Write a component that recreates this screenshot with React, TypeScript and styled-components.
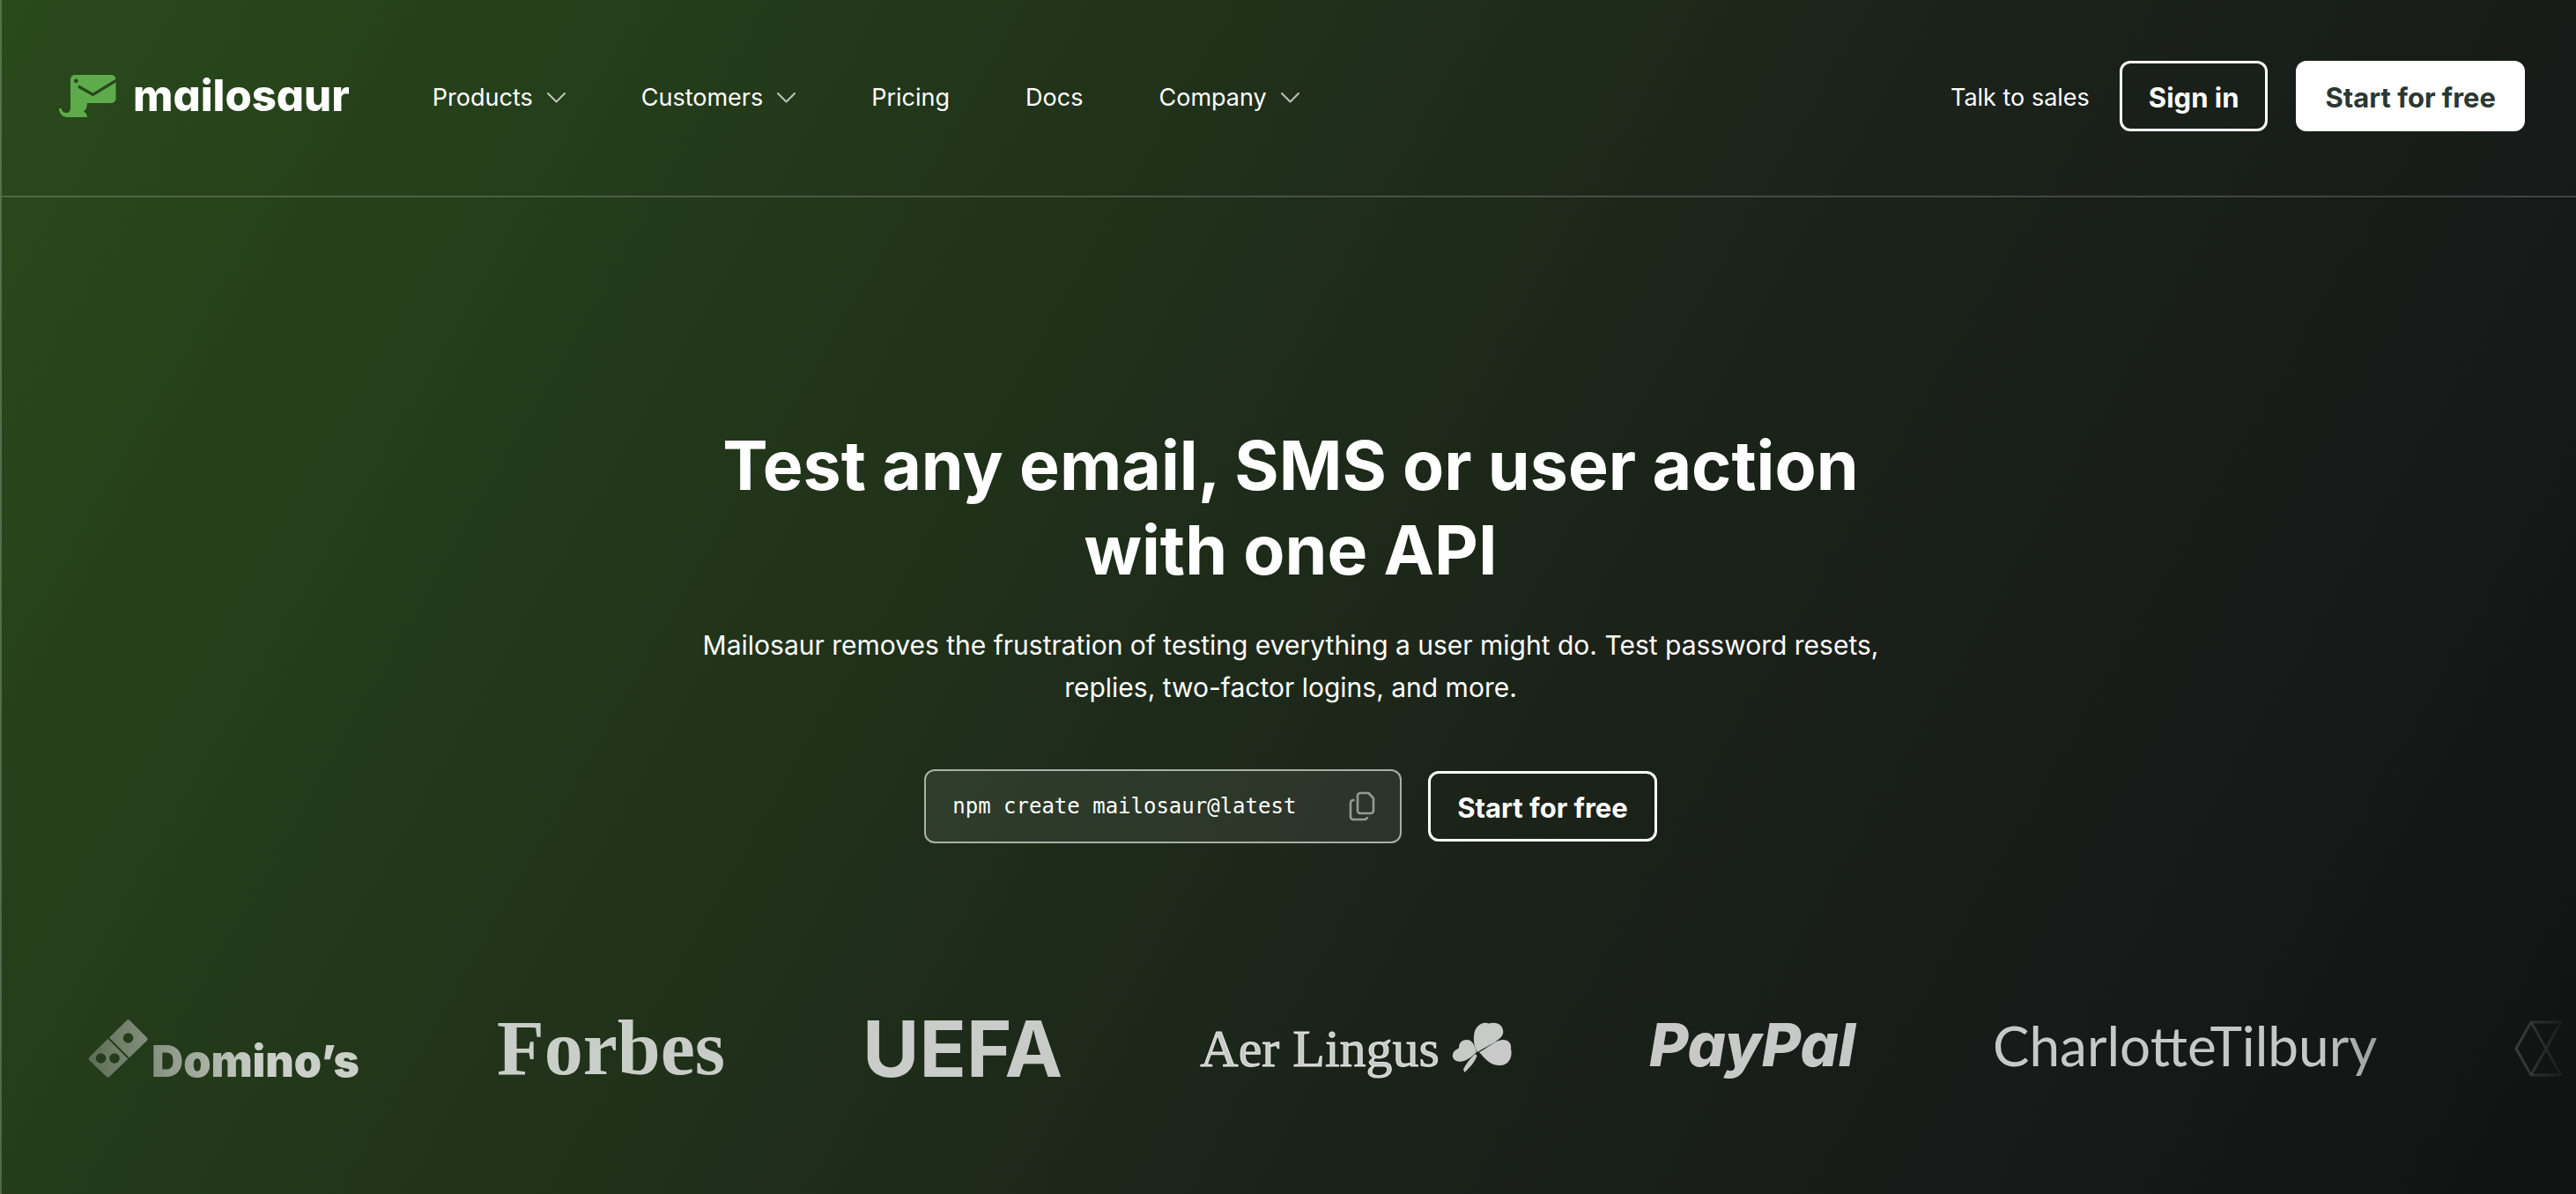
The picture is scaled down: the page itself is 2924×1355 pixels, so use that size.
import React from "react";
import styled, { createGlobalStyle } from "styled-components";

const sans = `Inter, "Liberation Sans", sans-serif`;

const GlobalStyle = createGlobalStyle`
  *, *::before, *::after { box-sizing: border-box; }
  body {
    margin: 0;
    background: #0f1312;
    color: #fff;
    font-family: ${sans};
  }
  a { color: inherit; text-decoration: none; }
  button { font: inherit; color: inherit; cursor: pointer; }
`;

const Page = styled.div`
  min-height: 100vh;
  display: flex;
  flex-direction: column;
  border-left: 2px solid rgba(255, 255, 255, 0.22);
  background: linear-gradient(120deg, #294a1b 0%, #1b2319 60%, #171b19 80%, #0f1312 100%);
  background-origin: border-box;
`;

const Header = styled.header`
  display: flex;
  align-items: center;
  height: 224px;
  padding: 0 58px 4px 65px;
  border-bottom: 2px solid rgba(255, 255, 255, 0.18);
`;

const Logo = styled.a`
  display: flex;
  align-items: center;
  gap: 18px;
  margin-right: 94px;
`;

const Wordmark = styled.span`
  font-size: 49px;
  font-weight: 800;
  line-height: 48px;
  font-feature-settings: "cv11";
`;

const Nav = styled.nav`
  display: flex;
  align-items: center;
  gap: 86px;
`;

const NavItem = styled.a`
  display: flex;
  align-items: center;
  gap: 16px;
  padding: 4px 0 0;
  font-size: 27px;
  line-height: 40px;
`;

const NavButton = styled(NavItem).attrs({ as: "button", type: "button" })`
  border: 0;
  background: none;
  font-family: ${sans};
`;

const Actions = styled.div`
  display: flex;
  align-items: center;
  gap: 32px;
  margin-left: auto;
`;

const SalesLink = styled(NavItem)`
  margin-right: 2px;
`;

const ButtonLink = styled.a<{ $solid?: boolean }>`
  display: flex;
  align-items: center;
  height: 80px;
  padding: 2px 30px 0;
  border: 3px solid #fff;
  border-radius: 12px;
  background: ${(p) => (p.$solid ? "#fff" : "transparent")};
  color: ${(p) => (p.$solid ? "#2b3832" : "#fff")};
  font-size: 31px;
  font-weight: 700;
  white-space: nowrap;
`;

const Hero = styled.main`
  display: flex;
  flex-direction: column;
  align-items: center;
  padding: 256px 48px 0 52px;
  text-align: center;
`;

const Title = styled.h1`
  max-width: 1360px;
  margin: 0;
  font-size: 77px;
  font-weight: 700;
  line-height: 96px;
`;

const Lead = styled.p`
  max-width: 1400px;
  margin: 36px 0 0;
  font-size: 30px;
  line-height: 48px;
`;

const CallToAction = styled.div`
  display: flex;
  align-items: center;
  gap: 30px;
  margin-top: 69px;
`;

const Command = styled.div`
  display: flex;
  align-items: center;
  justify-content: space-between;
  width: 542px;
  height: 84px;
  padding: 0 28px 0 30px;
  border: 2px solid rgba(255, 255, 255, 0.6);
  border-radius: 12px;
  background: rgba(255, 255, 255, 0.07);
`;

const Code = styled.code`
  font-family: "DejaVu Sans Mono", monospace;
  font-size: 24px;
  line-height: 32px;
`;

const CopyButton = styled.button`
  display: flex;
  padding: 0;
  border: 0;
  background: none;
  color: rgba(255, 255, 255, 0.5);
`;

const Brands = styled.ul`
  display: flex;
  align-items: center;
  gap: 156px;
  height: 106px;
  margin: 180px 0 0;
  padding: 0 0 0 98px;
  list-style: none;
  color: rgba(255, 255, 255, 0.76);
  mask-image: linear-gradient(to right, transparent, #000 10%, #000 90%, transparent);
`;

const Brand = styled.li<{ $gap?: number }>`
  display: flex;
  flex: none;
  align-items: center;
  gap: ${(p) => p.$gap ?? 0}px;
  height: 66px;
  white-space: nowrap;
`;

const BrandName = styled.span<{
  $size: number;
  $weight: number;
  $family?: string;
  $italic?: boolean;
  $thicken?: boolean;
  $drop?: number;
  $rise?: number;
}>`
  padding: ${(p) => p.$drop ?? 0}px 0 ${(p) => p.$rise ?? 0}px;
  font-family: ${(p) => p.$family ?? sans};
  font-size: ${(p) => p.$size}px;
  font-weight: ${(p) => p.$weight};
  font-style: ${(p) => (p.$italic ? "italic" : "normal")};
  line-height: 66px;
  -webkit-text-stroke: ${(p) => (p.$thicken ? "1px currentColor" : "0")};
`;

const Chevron = () => (
  <svg width="21" height="12" viewBox="0 0 21 12" fill="none" stroke="#fff" strokeOpacity="0.7" strokeWidth="2" aria-hidden="true">
    <path d="M1 1l9.5 9.5L20 1" strokeLinecap="round" strokeLinejoin="round" />
  </svg>
);

const DinosaurMark = () => (
  <svg width="66" height="48" viewBox="0 0 66 48" aria-hidden="true">
    <mask id="dino-cut">
      <rect width="66" height="48" fill="#fff" />
      <circle cx="19.3" cy="6.8" r="2.4" fill="#000" />
      <path d="M22 13l16.5 9.3L66 5.6" fill="none" stroke="#000" strokeWidth="3.2" />
    </mask>
    <path
      mask="url(#dino-cut)"
      fill="#5dab4a"
      d="M13 5a5 5 0 0 1 5-5h41.5a5 5 0 0 1 5 5v22a5 5 0 0 1-5 5H32c0 4-1 7.500-4.200 9.600C30 43 32 44.500 32 48H10C4 48 0 44 0 38h2.500c.8 3 2.500 5 5.500 5 3.500 0 5-2 5-6z"
    />
  </svg>
);

const CopyIcon = () => (
  <svg width="30" height="34" viewBox="0 0 30 34" fill="none" stroke="currentColor" strokeWidth="2.600" strokeLinejoin="round" aria-hidden="true">
    <path d="M13 2h9.500l5.500 6v14a3 3 0 0 1-3 3H13a3 3 0 0 1-3-3V5a3 3 0 0 1 3-3z" />
    <path d="M6.500 10H5a3 3 0 0 0-3 3v16a3 3 0 0 0 3 3h13a3 3 0 0 0 3-3" />
  </svg>
);

const DominoMark = () => (
  <svg width="68" height="66" viewBox="0 0 68 66" aria-hidden="true">
    <mask id="domino-cut">
      <rect width="68" height="66" fill="#fff" />
      <circle cx="45.500" cy="21" r="5.800" fill="#000" />
      <circle cx="14.500" cy="44" r="5.800" fill="#000" />
      <circle cx="30" cy="44" r="5.800" fill="#000" />
      <path d="M22 20l24 24" stroke="#000" strokeWidth="2" />
    </mask>
    <path
      mask="url(#domino-cut)"
      fill="currentColor"
      d="M43.500 1.200q2-2 4 0l19 19q2 2 0 4L24.500 64.500q-2 2-4 0l-19-18q-2-2 0-4z"
    />
  </svg>
);

const ShamrockMark = () => (
  <svg width="68" height="62" viewBox="0 0 68 62" fill="currentColor" aria-hidden="true">
    <path d="M29 35C24 27 24 16 26.500 10 30 2 38 .5 42 2.500 50 0 58 3 58.300 12 58 21 45 25 29 35z" />
    <path d="M31 35C41 30 50 21 58 21c6 0 10 4 9 10 2 8-1 18-11 19C44 51 38 43 31 35z" />
    <path d="M28 35C23 40 15 47 7 45.500 0 44 0 38 2 35c2-3 5-3.500 6-5 0-6 4-9 9-9 6 0 9 6 11 14z" />
    <path d="M26.500 37l2 2c-2 7-8 13-14 19l-1.500-3.500C16 48 21 42 26.500 37z" />
  </svg>
);

const HexagonMark = () => (
  <svg width="54" height="66" viewBox="0 0 54 66" fill="none" stroke="currentColor" strokeWidth="3" aria-hidden="true">
    <path d="M54 3H19L2 33l17 30h35" />
    <path d="M19 3l34 60M53 3L19 63" />
  </svg>
);

export default function App() {
  return (
    <>
      <GlobalStyle />
      <Page>
        <Header>
          <Logo href="#">
            <DinosaurMark />
            <Wordmark>mailosaur</Wordmark>
          </Logo>
          <Nav aria-label="Main">
            <NavButton>Products<Chevron /></NavButton>
            <NavButton>Customers<Chevron /></NavButton>
            <NavItem href="#">Pricing</NavItem>
            <NavItem href="#">Docs</NavItem>
            <NavButton>Company<Chevron /></NavButton>
          </Nav>
          <Actions>
            <SalesLink href="#">Talk to sales</SalesLink>
            <ButtonLink href="#">Sign in</ButtonLink>
            <ButtonLink href="#" $solid>Start for free</ButtonLink>
          </Actions>
        </Header>
        <Hero>
          <Title>Test any email, SMS or user action with one API</Title>
          <Lead>
            Mailosaur removes the frustration of testing everything a user might do. Test password resets,
            replies, two-factor logins, and more.
          </Lead>
          <CallToAction>
            <Command>
              <Code>npm create mailosaur@latest</Code>
              <CopyButton type="button" aria-label="Copy command"><CopyIcon /></CopyButton>
            </Command>
            <ButtonLink href="#">Start for free</ButtonLink>
          </CallToAction>
        </Hero>
        <Brands>
          <Brand $gap={4}>
            <DominoMark />
            <BrandName $size={50} $weight={900} $drop={28}>Domino’s</BrandName>
          </Brand>
          <Brand>
            <BrandName $size={88} $weight={700} $family={`"Liberation Serif", serif`}>Forbes</BrandName>
          </Brand>
          <Brand>
            <BrandName $size={88} $weight={700}>UEFA</BrandName>
          </Brand>
          <Brand $gap={14}>
            <BrandName $size={60} $weight={400} $family={`"Liberation Serif", serif`} $thicken>Aer Lingus</BrandName>
            <ShamrockMark />
          </Brand>
          <Brand>
            <BrandName $size={68} $weight={800} $italic $rise={10}>PayPal</BrandName>
          </Brand>
          <Brand>
            <BrandName $size={62} $weight={400} $family={`Lato, ${sans}`} $rise={8}>CharlotteTilbury</BrandName>
          </Brand>
          <Brand>
            <HexagonMark />
          </Brand>
        </Brands>
      </Page>
    </>
  );
}
